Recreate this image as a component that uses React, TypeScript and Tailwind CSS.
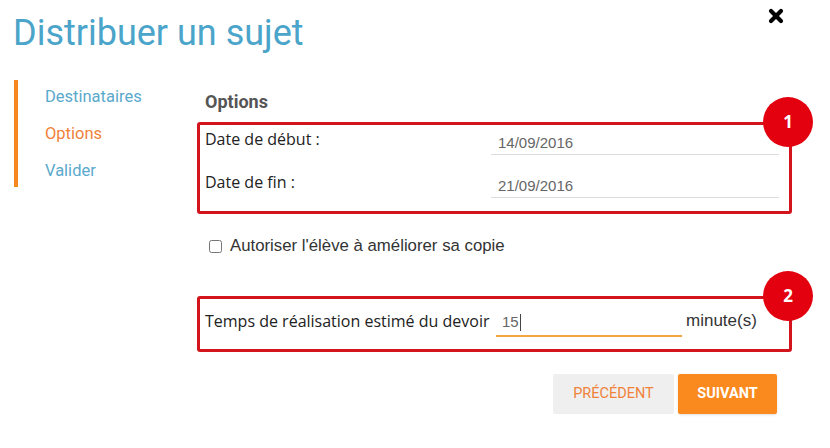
import { X } from "lucide-react";

const roboto = "font-['Roboto',sans-serif]";
const openSans = "font-['Open_Sans',sans-serif]";
const arial = "font-['Liberation_Sans',Arial,sans-serif]";

function Badge({ n }: { n: number }) {
	return (
		<span
			className={`absolute -right-[24px] -top-[28px] flex size-[50px] items-center justify-center rounded-full bg-[#e3000f] text-[17px] font-bold text-white ${openSans}`}
		>
			{n}
		</span>
	);
}

function DateRow({ label, value }: { label: string; value: string }) {
	return (
		<div className="flex h-[43px] items-start">
			<span className={`w-[286px] text-[16px] leading-[22px] text-[#222] ${openSans}`}>{label}</span>
			<div className="flex h-[27px] w-[288px] items-end border-b border-[#ddd] pb-[3px] pl-[7px]">
				<span className={`text-[15px] leading-[17px] text-[#666] ${arial}`}>{value}</span>
			</div>
		</div>
	);
}

export default function App() {
	return (
		<div className="relative h-[448px] w-[830px] overflow-hidden bg-white">
			<button className="absolute left-[766px] top-[6px] text-black">
				<X className="size-[20px]" strokeWidth={5} />
			</button>

			<h1 className={`pl-[13px] pt-[10px] text-[36px] leading-[46px] text-[#4ba4c9] ${roboto}`}>
				Distribuer un sujet
			</h1>

			<div className="mt-[24px] flex">
				{/* step nav */}
				<nav className="ml-[14px] h-[107px] w-[183px] border-l-[4px] border-[#f5891f] pl-[27px] pt-[6px]">
					<ul className={`flex flex-col gap-[15px] text-[16.5px] leading-[22px] ${roboto}`}>
						<li className="text-[#5aa9cc]">Destinataires</li>
						<li className="text-[#f0823a]">Options</li>
						<li className="text-[#5aa9cc]">Valider</li>
					</ul>
				</nav>

				<main className="w-[595px]">
					<h2 className={`pl-[8px] pt-[11px] text-[18px] font-bold leading-[22px] text-[#555] ${roboto}`}>
						Options
					</h2>

					<section className="relative mt-[9px] h-[92px] rounded-[3px] border-[3px] border-[#d3141c] pl-[5px] pt-[3px]">
						<DateRow label="Date de début :" value="14/09/2016" />
						<DateRow label="Date de fin :" value="21/09/2016" />
						<Badge n={1} />
					</section>

					<label className={`mt-[22px] flex items-center gap-[8px] pl-[12px] text-[16.8px] leading-[20px] text-[#333] ${arial}`}>
						<input type="checkbox" className="size-[13px] accent-gray-300" />
						Autoriser l'élève à améliorer sa copie
					</label>

					<section className="relative mt-[40px] flex h-[56px] items-start rounded-[3px] border-[3px] border-[#d3141c] pl-[5px] pt-[11px]">
						<span className={`w-[291px] text-[16px] leading-[22px] text-[#222] ${openSans}`}>
							Temps de réalisation estimé du devoir
						</span>
						<div className="flex w-[186px] flex-col">
							<div className="flex h-[25px] items-center pl-[6px]">
								<span className={`text-[15px] text-[#666] ${arial}`}>15</span>
								<span className="ml-px h-[17px] w-px bg-[#444]" />
							</div>
							<div className="h-[2px] bg-[#f3a642]" />
						</div>
						<span className={`ml-[4px] text-[17px] leading-[22px] text-[#333] ${arial}`}>minute(s)</span>
						<Badge n={2} />
					</section>

					<div className={`mt-[22px] flex justify-end gap-[4px] pr-[15px] text-[14.5px] ${roboto}`}>
						<button className="h-[40px] w-[121px] rounded-[2px] bg-[#efefef] uppercase text-[#f0823a]">
							Précédent
						</button>
						<button className="h-[40px] w-[99px] rounded-[2px] bg-[#fb8a1e] font-bold uppercase text-white shadow-sm">
							Suivant
						</button>
					</div>
				</main>
			</div>
		</div>
	);
}
